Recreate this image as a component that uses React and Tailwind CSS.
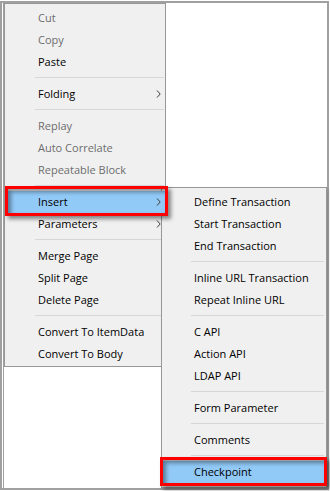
import React from 'react';

const mainItems = [
  { label: 'Cut', disabled: true },
  { label: 'Copy', disabled: true },
  { label: 'Paste' },
  { sep: true },
  { label: 'Folding', sub: true },
  { sep: true },
  { label: 'Replay', disabled: true },
  { label: 'Auto Correlate', disabled: true },
  { label: 'Repeatable Block', disabled: true },
  { sep: true },
  { label: 'Insert', sub: true, active: true },
  { label: 'Parameters', sub: true },
  { sep: true },
  { label: 'Merge Page' },
  { label: 'Split Page' },
  { label: 'Delete Page' },
  { sep: true },
  { label: 'Convert To ItemData' },
  { label: 'Convert To Body' },
];

const subItems = [
  { label: 'Define Transaction' },
  { label: 'Start Transaction' },
  { label: 'End Transaction' },
  { sep: true },
  { label: 'Inline URL Transaction' },
  { label: 'Repeat Inline URL' },
  { sep: true },
  { label: 'C API' },
  { label: 'Action API' },
  { label: 'LDAP API' },
  { sep: true },
  { label: 'Form Parameter' },
  { sep: true },
  { label: 'Comments' },
  { sep: true },
  { label: 'Checkpoint', active: true },
];

function Chevron() {
  return (
    <svg width="5" height="8" viewBox="0 0 5 8" className="ml-auto mr-[4px] shrink-0">
      <path d="M1 0.5 L4.2 4 L1 7.5" fill="none" stroke="#3c3c3c" strokeWidth="1" />
    </svg>
  );
}

function MenuList({ items, textPad, sepClass }) {
  return (
    <div className="flex flex-col">
      {items.map((item, i) => {
        if (item.sep) {
          return (
            <div key={i} className="h-[10px] pt-[4px]">
              <div className={`h-px bg-[#d7d7d7] ${sepClass}`} />
            </div>
          );
        }
        return (
          <div
            key={i}
            className={`flex items-center h-[22px] whitespace-nowrap ${textPad} ${
              item.active ? 'bg-[#91c9f7] relative z-20' : ''
            } ${item.disabled ? 'text-[#6d6d6d]' : 'text-black'}`}
          >
            <span>{item.label}</span>
            {item.sub && <Chevron />}
          </div>
        );
      })}
    </div>
  );
}

export default function App() {
  return (
    <div className="relative w-[330px] h-[491px] bg-white pt-[1px] text-[11px] font-['Open_Sans',sans-serif]">
      <div className="w-[329px] h-[489px] border-2 border-[#a0a0a0]">
        <div className="ml-[1px] h-full border-l border-[#a0a0a0]" />
      </div>

      {/* context menu */}
      <div className="absolute left-[4px] top-[3px] w-[162px] border border-[#979797] bg-[#f0f0f0] pt-[3px] pb-[1px]">
        <MenuList items={mainItems} textPad="pl-[33px]" sepClass="ml-[30px] mr-[1px]" />
      </div>

      {/* Insert submenu */}
      <div className="absolute left-[161px] top-[187px] z-10 w-[166px] border border-[#979797] bg-[#f0f0f0] pt-[3px] pb-[4px] shadow-[2px_2px_3px_rgba(0,0,0,0.15)]">
        <MenuList items={subItems} textPad="pl-[32px]" sepClass="ml-[29px] mr-[2px]" />
      </div>

      {/* red annotation boxes */}
      <div className="absolute left-[5px] top-[186px] z-30 w-[163px] h-[30px] border-[3px] border-[#ff0000] shadow-[3px_3px_4px_rgba(0,0,0,0.45),inset_3px_3px_4px_rgba(0,0,0,0.4)]" />
      <div className="absolute left-[160px] top-[457px] z-30 w-[167px] h-[29px] border-[3px] border-[#ff0000] shadow-[3px_3px_4px_rgba(0,0,0,0.45),inset_3px_3px_4px_rgba(0,0,0,0.4)]" />
    </div>
  );
}
